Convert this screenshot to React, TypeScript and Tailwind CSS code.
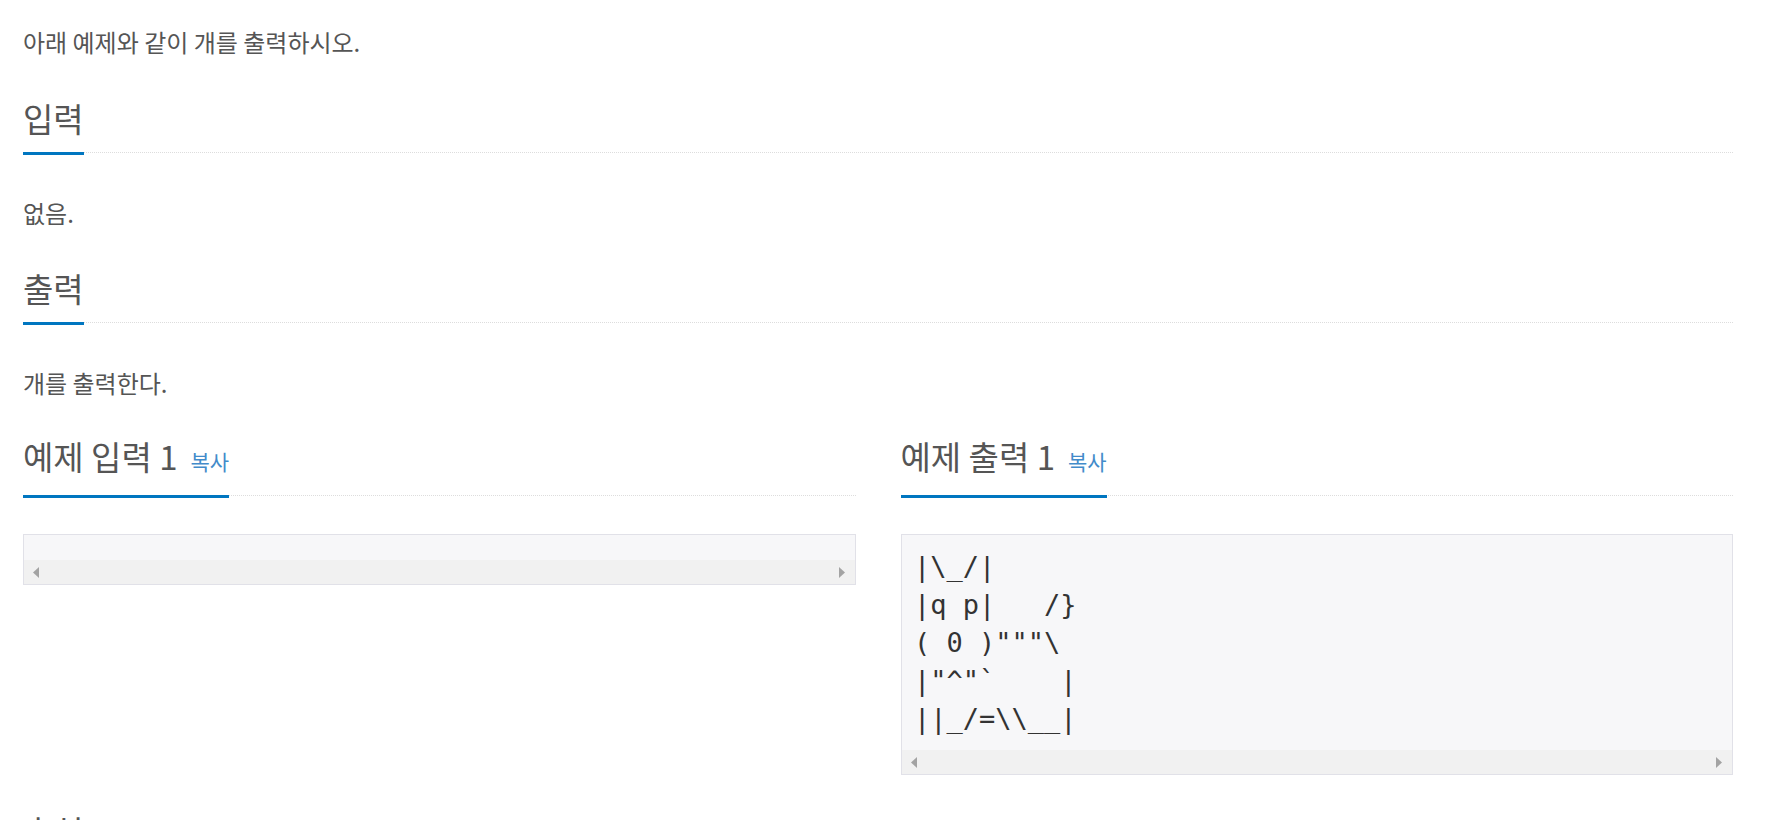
import React from "react";

const DOG = [
  "|\\_/|",
  "|q p|   /}",
  '( 0 )"""\\',
  '|"^"`    |',
  "||_/=\\\\__|",
].join("\n");

function Headline({ title, copy }: { title: string; copy?: boolean }) {
  return (
    <div className="border-b border-dotted border-[#dddddd]">
      <h2 className="mb-[-3px] inline-block border-b-[3px] border-[#0076c0] pb-[17px] text-[33px] font-normal leading-[33px] text-[#555555]">
        {title}
        {copy && (
          <span className="ml-[13px] text-[21px] text-[#428bca]">복사</span>
        )}
      </h2>
    </div>
  );
}

function Arrow({ dir }: { dir: "left" | "right" }) {
  return (
    <svg width="6" height="11" viewBox="0 0 6 11" className="block">
      {dir === "left" ? (
        <polygon points="6,0 6,11 0,5.5" fill="#a3a3a3" />
      ) : (
        <polygon points="0,0 0,11 6,5.5" fill="#a3a3a3" />
      )}
    </svg>
  );
}

function SampleBox({ text }: { text: string }) {
  return (
    <div className="mt-[38px] border border-[#e1e1e8] bg-[#f7f7f9]">
      <pre className="m-0 p-[12.5px] font-['DejaVu_Sans_Mono',monospace] text-[27px] leading-[38px] text-[#333333]">
        {text}
      </pre>
      <div className="flex h-[24px] items-center justify-between bg-[#f1f1f1] pl-[9px] pr-[10px]">
        <Arrow dir="left" />
        <Arrow dir="right" />
      </div>
    </div>
  );
}

export default function App() {
  return (
    <div className="min-h-screen bg-white pb-[40px] pl-[23px] pr-[38px] pt-[25px] font-['Noto_Sans_CJK_KR','Noto_Sans',sans-serif] text-[#555555]">
      <p className="text-[24px] leading-[33px]">아래 예제와 같이 개를 출력하시오.</p>

      <div className="mt-[44px]">
        <Headline title="입력" />
      </div>
      <p className="mt-[43px] text-[24px] leading-[33px]">없음.</p>

      <div className="mt-[43px]">
        <Headline title="출력" />
      </div>
      <p className="mt-[43px] text-[24px] leading-[33px]">개를 출력한다.</p>

      <div className="mt-[41px] grid grid-cols-2 gap-x-[45px]">
        <div>
          <Headline title="예제 입력 1" copy />
          <SampleBox text="" />
        </div>
        <div>
          <Headline title="예제 출력 1" copy />
          <SampleBox text={DOG} />
        </div>
      </div>

      <div className="mt-[40px]">
        <Headline title="출처" />
      </div>
    </div>
  );
}
